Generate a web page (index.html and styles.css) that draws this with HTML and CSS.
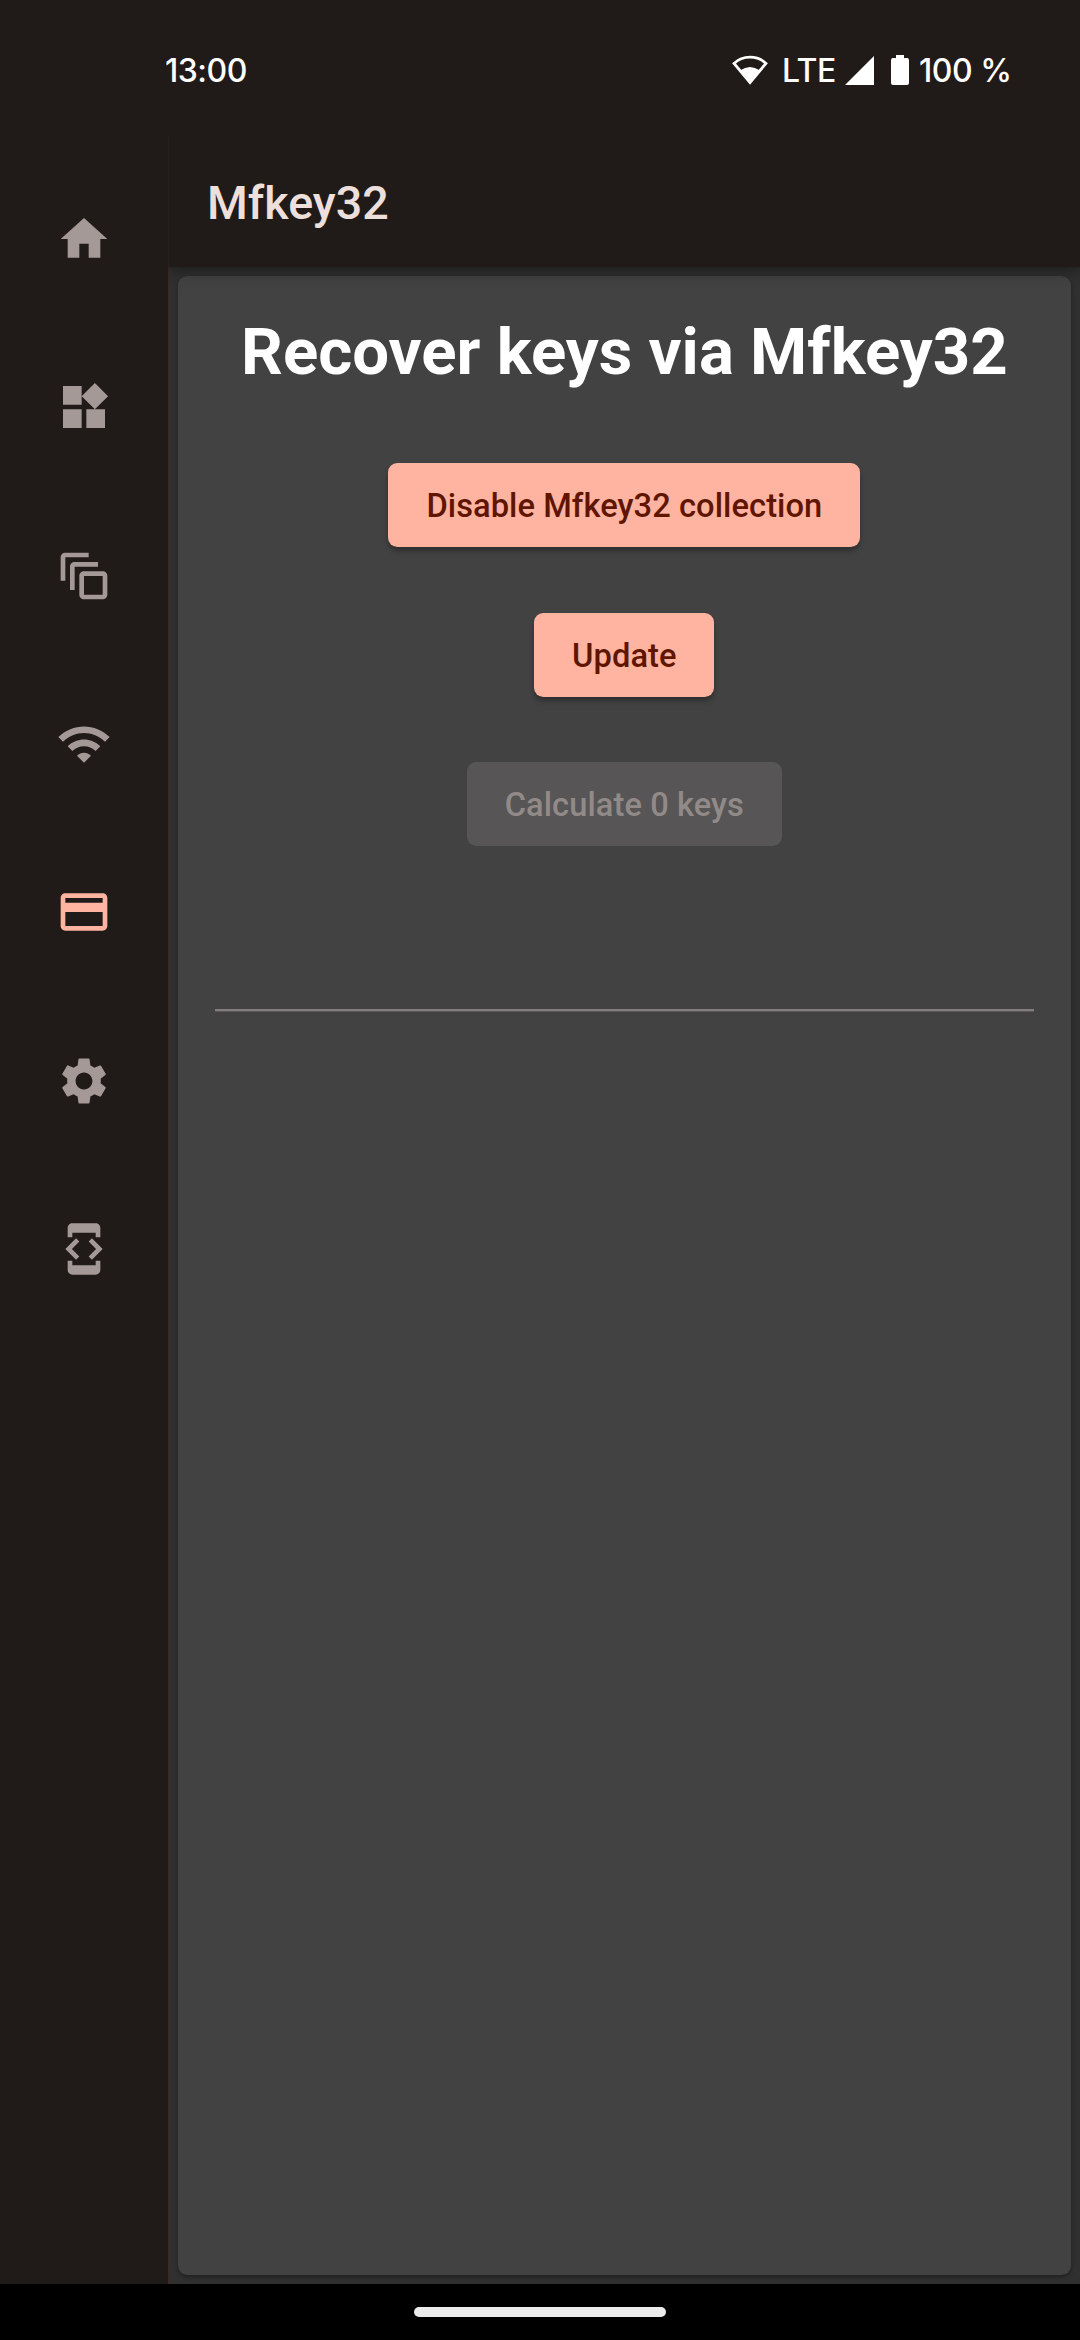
FILE: index.html
```html
<!DOCTYPE html>
<html lang="en">
<head>
<meta charset="utf-8">
<title>Mfkey32</title>
<link rel="stylesheet" href="styles.css">
</head>
<body>
<div class="screen">
  <div class="status">
    <span class="clock">13:00</span>
    <div class="indicators">
      <svg class="signal-wifi" viewBox="0 0 36 30"><path d="M18 2.2C11.5 2.2 6 4.6 2 8.400L18 27.500 34 8.400C30 4.600 24.500 2.200 18 2.200Z" fill="none" stroke="#fff" stroke-width="2.800"/><path d="M8 15.500Q18 8.500 28 15.500L18 28Z" fill="#fff"/></svg>
      <span class="network">LTE</span>
      <svg class="signal-cell" viewBox="0 0 29 29"><path d="M29 0V29H0Z" fill="#fff"/></svg>
      <svg class="battery" viewBox="0 0 18 30"><path d="M5 0H13V3H16Q18 3 18 5V28Q18 30 16 30H2Q0 30 0 28V5Q0 3 2 3H5Z" fill="#fff"/></svg>
      <span class="percent">100 %</span>
    </div>
  </div>
  <div class="app">
    <nav class="rail">
      <a class="rail-item"><svg viewBox="0 0 24 24"><path d="M10 20v-6h4v6h5v-8h3L12 3 2 12h3v8z"/></svg></a>
      <a class="rail-item"><svg viewBox="0 0 24 24"><path d="M13 13v8h8v-8h-8zM3 21h8v-8H3v8zM3 3v8h8V3H3zm13.660-1.310L11 7.340 16.660 13l5.660-5.660-5.660-5.650z"/></svg></a>
      <a class="rail-item"><svg viewBox="0 0 24 24"><path d="M14 2H4c-1.110 0-2 .9-2 2v10h2V4h10V2zm4 4H8c-1.110 0-2 .9-2 2v10h2V8h10V6zm2 4h-8c-1.110 0-2 .9-2 2v8c0 1.100.89 2 2 2h8c1.100 0 2-.9 2-2v-8c0-1.100-.9-2-2-2zm0 10h-8v-8h8v8z"/></svg></a>
      <a class="rail-item"><svg viewBox="0 0 24 24"><path d="M1 9l2 2c4.970-4.970 13.030-4.970 18 0l2-2C16.930 2.930 7.080 2.930 1 9zm8 8l3 3 3-3c-1.650-1.660-4.340-1.660-6 0zm-4-4l2 2c2.760-2.760 7.240-2.760 10 0l2-2C15.140 9.140 8.870 9.140 5 13z"/></svg></a>
      <a class="rail-item active"><svg viewBox="0 0 24 24"><path d="M20 4H4c-1.110 0-1.990.89-1.990 2L2 18c0 1.110.89 2 2 2h16c1.110 0 2-.89 2-2V6c0-1.110-.89-2-2-2zm0 14H4v-6h16v6zm0-10H4V6h16v2z"/></svg></a>
      <a class="rail-item"><svg viewBox="0 0 24 24"><path d="M19.140 12.940c.04-.3.06-.61.06-.94 0-.32-.02-.64-.07-.94l2.030-1.580c.18-.14.23-.41.12-.61l-1.920-3.320c-.12-.22-.37-.29-.59-.22l-2.390.96c-.5-.38-1.030-.7-1.620-.94l-.36-2.540c-.04-.24-.24-.41-.48-.41h-3.840c-.24 0-.43.17-.47.41l-.36 2.540c-.59.24-1.130.57-1.620.94l-2.390-.96c-.22-.08-.47 0-.59.22L2.740 8.870c-.12.21-.08.47.12.61l2.030 1.580c-.05.3-.09.63-.09.94s.02.64.07.94l-2.030 1.580c-.18.14-.23.41-.12.61l1.920 3.320c.12.22.37.29.59.22l2.390-.96c.5.38 1.030.7 1.620.94l.36 2.540c.05.24.24.41.48.41h3.840c.24 0 .44-.17.47-.41l.36-2.540c.59-.24 1.130-.56 1.620-.94l2.390.96c.22.08.47 0 .59-.22l1.920-3.320c.12-.22.07-.47-.12-.61l-2.010-1.580zM12 15.600c-1.980 0-3.600-1.620-3.600-3.600s1.620-3.600 3.600-3.600 3.600 1.620 3.600 3.600-1.620 3.600-3.600 3.600z"/></svg></a>
      <a class="rail-item"><svg viewBox="0 0 24 24"><path d="M7 5h10v2h2V3c0-1.100-.9-1.990-2-1.990L7 1c-1.100 0-2 .9-2 2v4h2V5zm8.410 11.590L20 12l-4.590-4.590L14 8.830 17.170 12 14 15.170l1.410 1.420zM10 15.170L6.830 12 10 8.830 8.590 7.410 4 12l4.590 4.590L10 15.170zM17 19H7v-2H5v4c0 1.100.9 2 2 2h10c1.100 0 2-.9 2-2v-4h-2v2z"/></svg></a>
    </nav>
    <div class="page">
      <header class="appbar">Mfkey32</header>
      <main class="content">
        <section class="card">
          <h1 class="heading">Recover keys via Mfkey32</h1>
          <div class="actions">
            <button class="btn btn-collect">Disable Mfkey32 collection</button>
            <button class="btn btn-update">Update</button>
            <button class="btn btn-calc" disabled>Calculate 0 keys</button>
          </div>
          <hr class="divider">
        </section>
      </main>
    </div>
  </div>
  <div class="gesture-bar"><div class="pill"></div></div>
</div>
</body>
</html>
```
FILE: styles.css
```css
* { box-sizing: border-box; }
body { margin: 0; background: #201a18; font-family: Roboto, "Liberation Sans", sans-serif; }
.screen { width: 1080px; height: 2340px; display: flex; flex-direction: column; overflow: hidden; }
.status {
  height: 136px; flex: none; display: flex; justify-content: space-between; align-items: flex-start;
  padding: 50px 69px 0 165px; color: #fff;
  font-family: Inter, Roboto, sans-serif; font-weight: 500; font-size: 32px; line-height: 41px; letter-spacing: -.5px;
}
.indicators { display: flex; }
.signal-wifi { width: 36px; height: 30px; margin: 5px 14px 0 0; }
.network { width: 63px; }
.signal-cell { width: 29px; height: 29px; margin-top: 6px; }
.battery { width: 18px; height: 30px; margin: 5px 10px 0 17px; }
.percent { width: 92px; white-space: nowrap; }
.app { flex: 1; min-height: 0; display: flex; }
.rail { width: 168px; flex: none; padding-top: 19px; }
.rail-item { height: 168.330px; display: flex; justify-content: center; align-items: center; }
.rail-item svg { width: 56px; height: 56px; fill: #a49997; }
.rail-item.active svg { fill: #ffb4a1; }
.page { flex: 1; display: flex; flex-direction: column; border-left: 1px solid #3f2822; }
.appbar {
  height: 131px; flex: none; padding: 2px 0 0 38px; margin-left: -1px;
  background: #201a18; border-left: 1px solid #262120;
  position: relative; z-index: 1; box-shadow: 0 3px 14px rgba(0, 0, 0, .45); clip-path: inset(0 0 -30px 0);
  display: flex; align-items: center; color: #ede0dc; font-size: 46.670px; font-weight: 500;
}
.content { flex: 1; display: flex; background: #303030; padding: 9px 9.300px 9px 9px; }
.card {
  flex: 1; background: #424242; border-radius: 9.300px; padding: 37px;
  box-shadow: 0 2px 4px rgba(0, 0, 0, .35);
}
.heading { margin: 0; color: #fff; font-size: 65.330px; line-height: 77px; font-weight: 700; text-align: center; white-space: nowrap; }
.actions { display: flex; flex-direction: column; align-items: center; gap: 65.500px; margin-top: 73px; }
.btn {
  height: 84px; border: 0; border-radius: 9.300px; padding: 2px 0 0; background: #ffb4a1; color: #5f1500;
  font: 500 32.670px/38px Roboto, sans-serif; letter-spacing: .06px;
  box-shadow: 0 4px 5px rgba(0, 0, 0, .3);
}
.btn-collect { width: 472px; }
.btn-update { width: 180px; }
.btn-calc { width: 315.500px; background: #575555; color: #918a88; box-shadow: none; }
.divider { height: 3px; margin: 163px 0 0; border: 0; background: #857e7e; border-bottom: 1px solid #5a5757; }
.gesture-bar { height: 56px; flex: none; background: #000; display: flex; align-items: center; justify-content: center; }
.pill { width: 252px; height: 10px; border-radius: 5px; background: #ececec; }
```
